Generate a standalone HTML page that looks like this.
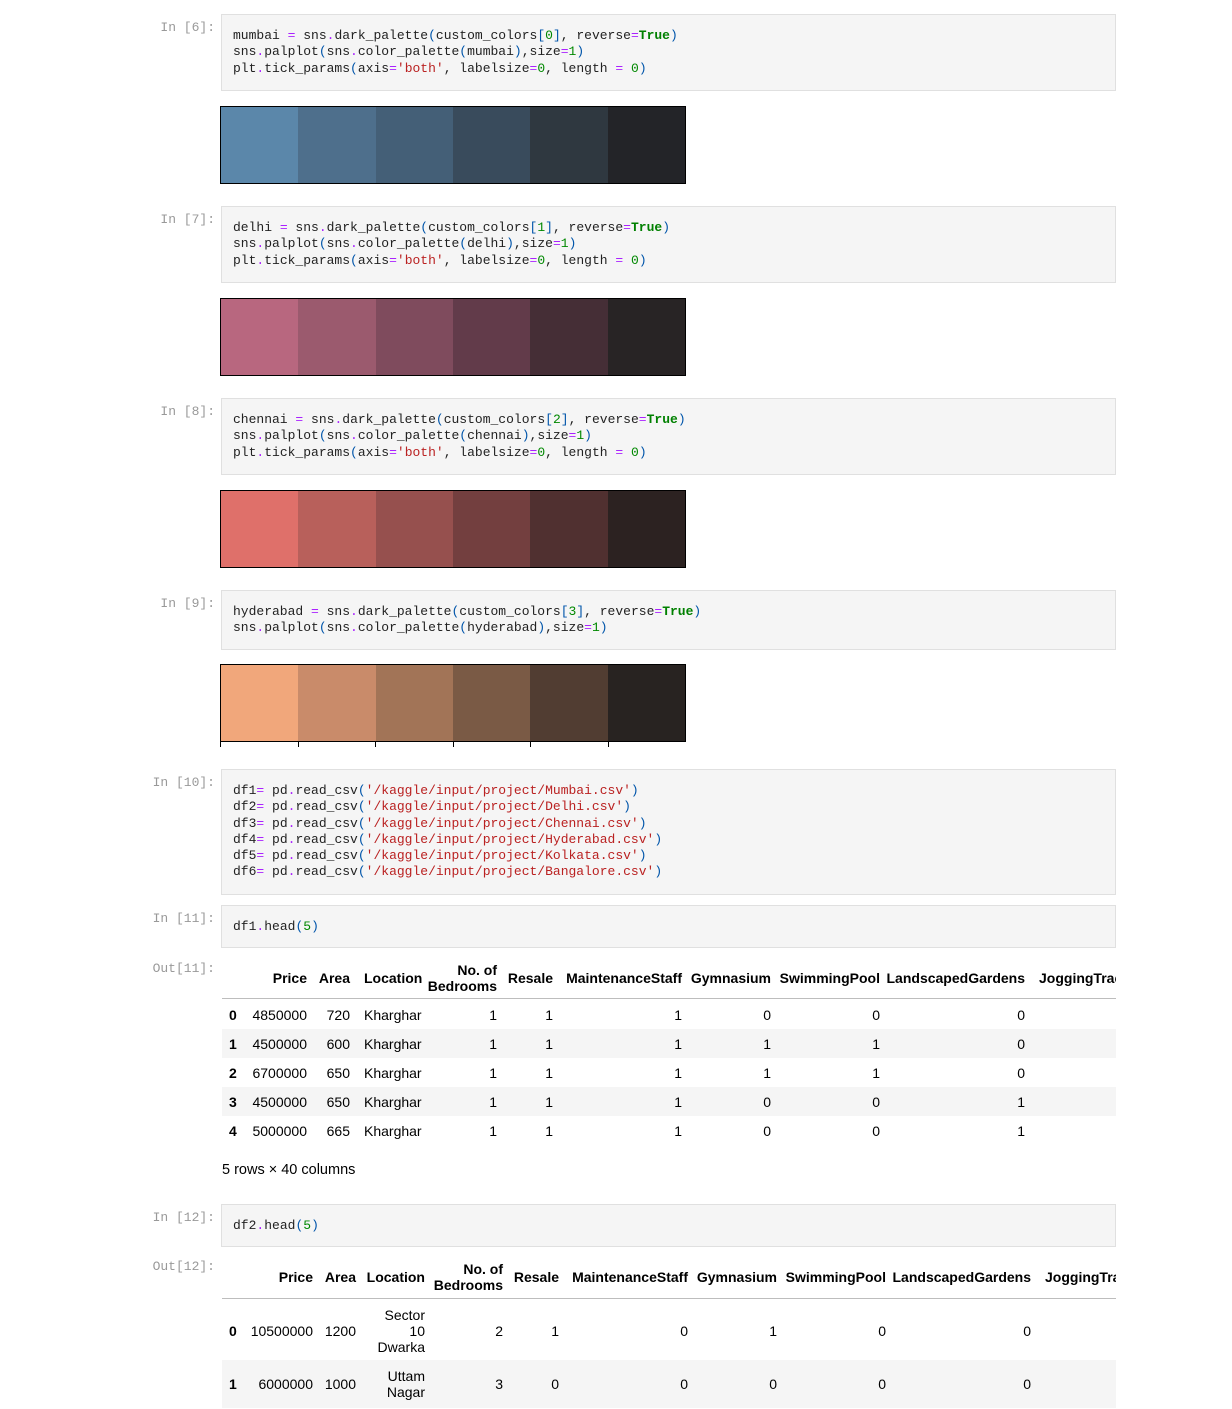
<!DOCTYPE html>
<html><head><meta charset="utf-8"><style>
body{margin:0;width:1232px;height:1408px;background:#fff;position:relative;overflow:hidden;font-family:"Liberation Sans",Arial,sans-serif;}
.pr{position:absolute;right:1017px;font:13px/16px "Liberation Mono",monospace;color:#999;white-space:pre;}
.cell{position:absolute;left:221px;width:893px;background:#f5f5f5;border:1px solid #e0e0e0;}
.code{position:absolute;left:233px;font:13px/16.3px "Liberation Mono",monospace;color:#222;white-space:pre;}
.o{color:#aa22ff}.b{color:#0055aa}.n{color:#008800}.k{color:#008000;font-weight:bold}.s{color:#ba2121}
.pal{position:absolute;left:220px;width:464px;height:76px;border:1px solid #000;display:flex;}
.pal div{flex:1;}
.clip{position:absolute;left:0;top:1px;width:1116px;height:1408px;overflow:hidden;}
.t{position:absolute;font-size:14px;line-height:16px;color:#000;white-space:pre;}
.h{font-weight:bold}
.stripe{position:absolute;left:222px;width:894px;background:#f5f5f5;}
.tick{position:absolute;top:742px;width:1px;height:5px;background:#000;}
</style></head><body>

<div class="pr" style="top:20px">In [6]:</div>
<div class="cell" style="top:14px;height:75px"></div>
<div class="code" style="top:28px">mumbai <span class="o">=</span> sns<span class="o">.</span>dark_palette<span class="b">(</span>custom_colors<span class="b">[</span><span class="n">0</span><span class="b">]</span>, reverse<span class="o">=</span><span class="k">True</span><span class="b">)</span>
sns<span class="o">.</span>palplot<span class="b">(</span>sns<span class="o">.</span>color_palette<span class="b">(</span>mumbai<span class="b">)</span>,size<span class="o">=</span><span class="n">1</span><span class="b">)</span>
plt<span class="o">.</span>tick_params<span class="b">(</span>axis<span class="o">=</span><span class="s">'both'</span>, labelsize<span class="o">=</span><span class="n">0</span>, length <span class="o">=</span> <span class="n">0</span><span class="b">)</span></div>
<div class="pal" style="top:106px"><div style="background:#5b87aa"></div><div style="background:#4e6f8c"></div><div style="background:#445f77"></div><div style="background:#394b5c"></div><div style="background:#2f3840"></div><div style="background:#232428"></div></div>

<div class="pr" style="top:212px">In [7]:</div>
<div class="cell" style="top:206px;height:75px"></div>
<div class="code" style="top:220px">delhi <span class="o">=</span> sns<span class="o">.</span>dark_palette<span class="b">(</span>custom_colors<span class="b">[</span><span class="n">1</span><span class="b">]</span>, reverse<span class="o">=</span><span class="k">True</span><span class="b">)</span>
sns<span class="o">.</span>palplot<span class="b">(</span>sns<span class="o">.</span>color_palette<span class="b">(</span>delhi<span class="b">)</span>,size<span class="o">=</span><span class="n">1</span><span class="b">)</span>
plt<span class="o">.</span>tick_params<span class="b">(</span>axis<span class="o">=</span><span class="s">'both'</span>, labelsize<span class="o">=</span><span class="n">0</span>, length <span class="o">=</span> <span class="n">0</span><span class="b">)</span></div>
<div class="pal" style="top:298px"><div style="background:#b8677f"></div><div style="background:#9b5a6e"></div><div style="background:#7f4b5d"></div><div style="background:#623b4a"></div><div style="background:#452e36"></div><div style="background:#282425"></div></div>

<div class="pr" style="top:404px">In [8]:</div>
<div class="cell" style="top:398px;height:75px"></div>
<div class="code" style="top:412px">chennai <span class="o">=</span> sns<span class="o">.</span>dark_palette<span class="b">(</span>custom_colors<span class="b">[</span><span class="n">2</span><span class="b">]</span>, reverse<span class="o">=</span><span class="k">True</span><span class="b">)</span>
sns<span class="o">.</span>palplot<span class="b">(</span>sns<span class="o">.</span>color_palette<span class="b">(</span>chennai<span class="b">)</span>,size<span class="o">=</span><span class="n">1</span><span class="b">)</span>
plt<span class="o">.</span>tick_params<span class="b">(</span>axis<span class="o">=</span><span class="s">'both'</span>, labelsize<span class="o">=</span><span class="n">0</span>, length <span class="o">=</span> <span class="n">0</span><span class="b">)</span></div>
<div class="pal" style="top:490px"><div style="background:#df706a"></div><div style="background:#b8605b"></div><div style="background:#96504e"></div><div style="background:#733f3f"></div><div style="background:#503030"></div><div style="background:#2c2221"></div></div>

<div class="pr" style="top:596px">In [9]:</div>
<div class="cell" style="top:590px;height:58px"></div>
<div class="code" style="top:604px">hyderabad <span class="o">=</span> sns<span class="o">.</span>dark_palette<span class="b">(</span>custom_colors<span class="b">[</span><span class="n">3</span><span class="b">]</span>, reverse<span class="o">=</span><span class="k">True</span><span class="b">)</span>
sns<span class="o">.</span>palplot<span class="b">(</span>sns<span class="o">.</span>color_palette<span class="b">(</span>hyderabad<span class="b">)</span>,size<span class="o">=</span><span class="n">1</span><span class="b">)</span></div>
<div class="pal" style="top:664px"><div style="background:#f1a77b"></div><div style="background:#c98b6a"></div><div style="background:#a27457"></div><div style="background:#7a5a45"></div><div style="background:#513d32"></div><div style="background:#282321"></div></div>
<div class="tick" style="left:220px"></div><div class="tick" style="left:298px"></div><div class="tick" style="left:375px"></div><div class="tick" style="left:453px"></div><div class="tick" style="left:530px"></div><div class="tick" style="left:608px"></div>

<div class="pr" style="top:775px">In [10]:</div>
<div class="cell" style="top:769px;height:124px"></div>
<div class="code" style="top:783px">df1<span class="o">=</span> pd<span class="o">.</span>read_csv<span class="b">(</span><span class="s">'/kaggle/input/project/Mumbai.csv'</span><span class="b">)</span>
df2<span class="o">=</span> pd<span class="o">.</span>read_csv<span class="b">(</span><span class="s">'/kaggle/input/project/Delhi.csv'</span><span class="b">)</span>
df3<span class="o">=</span> pd<span class="o">.</span>read_csv<span class="b">(</span><span class="s">'/kaggle/input/project/Chennai.csv'</span><span class="b">)</span>
df4<span class="o">=</span> pd<span class="o">.</span>read_csv<span class="b">(</span><span class="s">'/kaggle/input/project/Hyderabad.csv'</span><span class="b">)</span>
df5<span class="o">=</span> pd<span class="o">.</span>read_csv<span class="b">(</span><span class="s">'/kaggle/input/project/Kolkata.csv'</span><span class="b">)</span>
df6<span class="o">=</span> pd<span class="o">.</span>read_csv<span class="b">(</span><span class="s">'/kaggle/input/project/Bangalore.csv'</span><span class="b">)</span></div>

<div class="pr" style="top:911px">In [11]:</div>
<div class="cell" style="top:905px;height:41px"></div>
<div class="code" style="top:919px">df1<span class="o">.</span>head<span class="b">(</span><span class="n">5</span><span class="b">)</span></div>

<div class="pr" style="top:961px">Out[11]:</div>
<div class="stripe" style="top:1029px;height:29px"></div>
<div class="stripe" style="top:1087px;height:29px"></div>
<div style="position:absolute;left:222px;top:998px;width:894px;height:1px;background:#bdbdbd"></div>
<div class="clip">
<span class="t h" style="right:809px;top:969px">Price</span>
<span class="t h" style="right:766px;top:969px">Area</span>
<span class="t h" style="left:364px;top:969px">Location</span>
<span class="t h" style="right:619px;top:961px;text-align:right">No. of
Bedrooms</span>
<span class="t h" style="right:563px;top:969px">Resale</span>
<span class="t h" style="right:434px;top:969px">MaintenanceStaff</span>
<span class="t h" style="right:345px;top:969px">Gymnasium</span>
<span class="t h" style="right:236px;top:969px">SwimmingPool</span>
<span class="t h" style="right:91px;top:969px">LandscapedGardens</span>
<span class="t h" style="left:1039px;top:969px">JoggingTrack</span>

<span class="t h" style="left:229px;top:1006px">0</span><span class="t" style="right:809px;top:1006px">4850000</span><span class="t" style="right:766px;top:1006px">720</span><span class="t" style="left:364px;top:1006px">Kharghar</span><span class="t" style="right:619px;top:1006px">1</span><span class="t" style="right:563px;top:1006px">1</span><span class="t" style="right:434px;top:1006px">1</span><span class="t" style="right:345px;top:1006px">0</span><span class="t" style="right:236px;top:1006px">0</span><span class="t" style="right:91px;top:1006px">0</span>
<span class="t h" style="left:229px;top:1035px">1</span><span class="t" style="right:809px;top:1035px">4500000</span><span class="t" style="right:766px;top:1035px">600</span><span class="t" style="left:364px;top:1035px">Kharghar</span><span class="t" style="right:619px;top:1035px">1</span><span class="t" style="right:563px;top:1035px">1</span><span class="t" style="right:434px;top:1035px">1</span><span class="t" style="right:345px;top:1035px">1</span><span class="t" style="right:236px;top:1035px">1</span><span class="t" style="right:91px;top:1035px">0</span>
<span class="t h" style="left:229px;top:1064px">2</span><span class="t" style="right:809px;top:1064px">6700000</span><span class="t" style="right:766px;top:1064px">650</span><span class="t" style="left:364px;top:1064px">Kharghar</span><span class="t" style="right:619px;top:1064px">1</span><span class="t" style="right:563px;top:1064px">1</span><span class="t" style="right:434px;top:1064px">1</span><span class="t" style="right:345px;top:1064px">1</span><span class="t" style="right:236px;top:1064px">1</span><span class="t" style="right:91px;top:1064px">0</span>
<span class="t h" style="left:229px;top:1093px">3</span><span class="t" style="right:809px;top:1093px">4500000</span><span class="t" style="right:766px;top:1093px">650</span><span class="t" style="left:364px;top:1093px">Kharghar</span><span class="t" style="right:619px;top:1093px">1</span><span class="t" style="right:563px;top:1093px">1</span><span class="t" style="right:434px;top:1093px">1</span><span class="t" style="right:345px;top:1093px">0</span><span class="t" style="right:236px;top:1093px">0</span><span class="t" style="right:91px;top:1093px">1</span>
<span class="t h" style="left:229px;top:1122px">4</span><span class="t" style="right:809px;top:1122px">5000000</span><span class="t" style="right:766px;top:1122px">665</span><span class="t" style="left:364px;top:1122px">Kharghar</span><span class="t" style="right:619px;top:1122px">1</span><span class="t" style="right:563px;top:1122px">1</span><span class="t" style="right:434px;top:1122px">1</span><span class="t" style="right:345px;top:1122px">0</span><span class="t" style="right:236px;top:1122px">0</span><span class="t" style="right:91px;top:1122px">1</span>
</div>
<span class="t" style="left:222px;top:1162px;font-size:14.5px">5 rows × 40 columns</span>

<div class="pr" style="top:1210px">In [12]:</div>
<div class="cell" style="top:1204px;height:41px"></div>
<div class="code" style="top:1218px">df2<span class="o">.</span>head<span class="b">(</span><span class="n">5</span><span class="b">)</span></div>

<div class="pr" style="top:1259px">Out[12]:</div>
<div class="stripe" style="top:1360px;height:48px"></div>
<div style="position:absolute;left:222px;top:1298px;width:894px;height:1px;background:#bdbdbd"></div>
<div class="clip">
<span class="t h" style="right:803px;top:1268px">Price</span>
<span class="t h" style="right:760px;top:1268px">Area</span>
<span class="t h" style="right:691px;top:1268px">Location</span>
<span class="t h" style="right:613px;top:1260px;text-align:right">No. of
Bedrooms</span>
<span class="t h" style="right:557px;top:1268px">Resale</span>
<span class="t h" style="right:428px;top:1268px">MaintenanceStaff</span>
<span class="t h" style="right:339px;top:1268px">Gymnasium</span>
<span class="t h" style="right:230px;top:1268px">SwimmingPool</span>
<span class="t h" style="right:85px;top:1268px">LandscapedGardens</span>
<span class="t h" style="left:1045px;top:1268px">JoggingTrack</span>

<span class="t h" style="left:229px;top:1322px">0</span><span class="t" style="right:803px;top:1322px">10500000</span><span class="t" style="right:760px;top:1322px">1200</span><span class="t" style="right:691px;top:1306px;text-align:right">Sector
10
Dwarka</span><span class="t" style="right:613px;top:1322px">2</span><span class="t" style="right:557px;top:1322px">1</span><span class="t" style="right:428px;top:1322px">0</span><span class="t" style="right:339px;top:1322px">1</span><span class="t" style="right:230px;top:1322px">0</span><span class="t" style="right:85px;top:1322px">0</span>
<span class="t h" style="left:229px;top:1375px">1</span><span class="t" style="right:803px;top:1375px">6000000</span><span class="t" style="right:760px;top:1375px">1000</span><span class="t" style="right:691px;top:1367px;text-align:right">Uttam
Nagar</span><span class="t" style="right:613px;top:1375px">3</span><span class="t" style="right:557px;top:1375px">0</span><span class="t" style="right:428px;top:1375px">0</span><span class="t" style="right:339px;top:1375px">0</span><span class="t" style="right:230px;top:1375px">0</span><span class="t" style="right:85px;top:1375px">0</span>
</div>
</body></html>
